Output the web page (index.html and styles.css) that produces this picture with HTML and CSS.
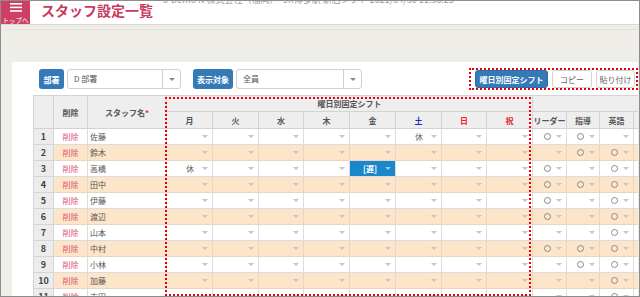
FILE: index.html
```html
<!DOCTYPE html>
<html lang="ja">
<head>
    <meta charset="UTF-8">
    <meta name="viewport" content="width=device-width, initial-scale=1.0">
    <title>スタッフ設定一覧</title>
    <link rel="stylesheet" href="styles.css">
</head>
<body>
<div class="frame">
    <!-- Header -->
    <header class="topbar">
        <div class="menu-btn">
            <svg class="menu-icon" viewBox="0 0 12 9" width="12" height="9">
                <rect x="0" y="0" width="12" height="1.6" fill="#fff"/>
                <rect x="0" y="3.6" width="12" height="1.6" fill="#fff"/>
                <rect x="0" y="7.2" width="12" height="1.6" fill="#fff"/>
            </svg>
            <span class="menu-label">トップへ</span>
        </div>
        <h1 class="page-title">スタッフ設定一覧</h1>
        <div class="account">0-Demo N 株式会社（福岡）　JR博多駅 新店シフト 2021/04/30 11:36:25</div>
    </header>

    <div class="stage">
        <div class="rule"></div>

        <div class="panel">
            <!-- Toolbar -->
            <div class="toolbar">
                <span class="tag tag-short">部署</span>
                <div class="select select-dept">
                    <span class="select-value">D 部署</span>
                    <span class="select-arrow"><i class="caret"></i></span>
                </div>
                <span class="tag tag-long">表示対象</span>
                <div class="select select-target">
                    <span class="select-value">全員</span>
                    <span class="select-arrow"><i class="caret"></i></span>
                </div>

                <div class="action-box">
                    <button class="btn btn-primary">曜日別固定シフト</button>
                    <button class="btn btn-copy">コピー</button>
                    <button class="btn btn-paste">貼り付け</button>
                </div>
            </div>

            <!-- Staff grid -->
            <div class="grid-wrap">
                <table class="grid">
                    <colgroup>
                        <col style="width:20px"><col style="width:34px"><col style="width:79px">
                        <col style="width:46px"><col style="width:46px"><col style="width:45px"><col style="width:46px">
                        <col style="width:46px"><col style="width:46px"><col style="width:45px"><col style="width:46px">
                        <col style="width:34px"><col style="width:33px"><col style="width:34px"><col style="width:40px">
                    </colgroup>
                    <thead>
                        <tr class="head-top">
                            <th rowspan="2"></th>
                            <th rowspan="2">削除</th>
                            <th rowspan="2">スタッフ名<span class="req">*</span></th>
                            <th colspan="8">曜日別固定シフト</th>
                            <th colspan="4"></th>
                        </tr>
                        <tr class="head-sub">
                            <th>月</th><th>火</th><th>水</th><th>木</th><th>金</th>
                            <th class="sat">土</th><th class="sun">日</th><th class="sun">祝</th>
                            <th>リーダー</th><th>指導</th><th>英語</th><th></th>
                        </tr>
                    </thead>
                    <tbody id="rows"></tbody>
                </table>
                <div class="shift-frame"></div>
            </div>
        </div>
    </div>
</div>

<script>
    // staff rows: name, fixed shifts by weekday index, flags (leader, coach, english)
    const staff = [
        ['佐藤', {5: '休'}, [1, 1, 0]],
        ['鈴木', {}, [0, 1, 1]],
        ['高橋', {0: '休', 4: '[遅]'}, [1, 0, 1]],
        ['田中', {}, [1, 1, 1]],
        ['伊藤', {}, [1, 0, 1]],
        ['渡辺', {}, [1, 0, 1]],
        ['山本', {}, [0, 0, 1]],
        ['中村', {}, [1, 1, 1]],
        ['小林', {}, [0, 1, 1]],
        ['加藤', {}, [0, 0, 1]],
        ['吉田', {}, [0, 0, 1]]
    ];

    const tbody = document.getElementById('rows');
    staff.forEach(function (s, i) {
        let html = '<td class="num">' + (i + 1) + '</td>'
            + '<td class="del">削除</td>'
            + '<td class="name">' + s[0] + '</td>';
        for (let d = 0; d < 8; d++) {
            const v = s[1][d] || '';
            const picked = (i === 2 && d === 4) ? ' class="picked"' : '';
            html += '<td' + picked + '><div class="dd">' + v + '</div></td>';
        }
        s[2].forEach(function (f) {
            html += '<td><div class="dd flag">' + (f ? '<span class="circle"></span>' : '') + '</div></td>';
        });
        html += '<td></td>';
        const tr = document.createElement('tr');
        if (i % 2 === 1) tr.className = 'alt';
        tr.innerHTML = html;
        tbody.appendChild(tr);
    });
</script>
</body>
</html>
```

FILE: styles.css
```css
/* General */
body {
    margin: 0;
}

.frame {
    width: 640px;
    height: 297px;
    box-sizing: border-box;
    border: 1px solid #8d8d8d;
    background: #efede8;
    overflow: hidden;
    font-family: "Noto Sans CJK JP", "Noto Sans", sans-serif;
}

/* Header */
.topbar {
    display: flex;
    height: 23px;
    background: #fff;
    border-bottom: 1px solid #dcd9d3;
    overflow: hidden;
}

.menu-btn {
    width: 29px;
    flex: none;
    background: #cf3f63;
    color: #fff;
    display: flex;
    flex-direction: column;
    align-items: center;
}

.menu-icon {
    margin-top: 2px;
}

.menu-label {
    font-size: 6.5px;
    line-height: 8px;
    margin-top: 4px;
    white-space: nowrap;
}

.page-title {
    margin: 1px 0 0 11px;
    font-size: 14px;
    line-height: 16px;
    font-weight: 700;
    color: #c93b5e;
    white-space: nowrap;
}

.account {
    margin: -7px 0 0 10px;
    font-size: 9px;
    line-height: 12px;
    color: #999;
    white-space: nowrap;
}

/* Page body */
.stage {
    padding: 4px 1px 0 11px;
}

.rule {
    height: 1px;
    margin-left: -2px;
    background: #e3e0da;
}

.panel {
    margin-top: 32px;
    height: 260px;
    background: #fff;
    padding: 6px 0 0 21px;
    overflow: hidden;
}

/* Toolbar */
.toolbar {
    display: flex;
    align-items: center;
    height: 22px;
    margin-left: 6px;
}

.tag {
    height: 20px;
    box-sizing: border-box;
    display: flex;
    align-items: center;
    justify-content: center;
    background: #337ab7;
    color: #fff;
    font-size: 8px;
    font-weight: 700;
    border-radius: 3px;
}

.tag-short {
    width: 25px;
}

.tag-long {
    width: 40px;
    margin-left: 12px;
}

.select {
    height: 20px;
    box-sizing: border-box;
    margin-left: 3px;
    display: flex;
    border: 1px solid #d0d0d0;
    border-radius: 3px;
}

.select-dept {
    width: 114px;
}

.select-target {
    width: 126px;
}

.select-value {
    flex: 1;
    padding-left: 6px;
    font-size: 8px;
    line-height: 18px;
    color: #555;
}

.select-arrow {
    width: 17px;
    border-left: 1px solid #d0d0d0;
    display: flex;
    align-items: center;
    justify-content: center;
}

.caret {
    border-left: 3px solid transparent;
    border-right: 3px solid transparent;
    border-top: 3px solid #888;
}

.action-box {
    margin-left: auto;
    height: 22px;
    box-sizing: border-box;
    border: 2px dotted #e5000c;
    padding: 0 1px 0 4px;
    display: flex;
    align-items: center;
    gap: 4px;
}

.btn {
    height: 18px;
    box-sizing: border-box;
    padding: 0;
    font-family: inherit;
    font-size: 8px;
    border-radius: 3px;
    cursor: pointer;
}

.btn-primary {
    width: 73px;
    background: #337ab7;
    border: 1px solid #2e6da4;
    color: #fff;
    font-weight: 700;
}

.btn-copy,
.btn-paste {
    background: #fff;
    border: 1px solid #d4d4d4;
    color: #666;
}

.btn-copy {
    width: 40px;
}

.btn-paste {
    width: 39px;
}

/* Grid */
.grid-wrap {
    position: relative;
    margin-top: 5px;
}

.grid {
    border-collapse: collapse;
    table-layout: fixed;
    width: 640px;
}

.grid th {
    background: #eeeeee;
    border: 1px solid #d3d3d3;
    color: #555;
    font-size: 8px;
    font-weight: 700;
    padding: 0;
    white-space: nowrap;
}

.head-top th {
    height: 15px;
}

.head-sub th {
    height: 16px;
}

.grid th.sat {
    color: #2323d0;
}

.grid th.sun {
    color: #e8262c;
}

.req {
    color: #e8262c;
}

.grid td {
    height: 15px;
    padding: 0;
    border: 1px solid #dcdcdc;
    font-size: 8px;
    color: #555;
    white-space: nowrap;
    overflow: hidden;
}

.grid tr.alt td {
    background: #fce5c9;
    border-color: #e6d6c2;
}

.grid td.num,
.grid tr.alt td.num {
    background: #ececec;
    border-color: #d6d6d6;
    text-align: center;
    font-size: 9px;
    font-weight: 700;
    color: #444;
}

.grid td.del {
    text-align: center;
    color: #e0577a;
}

.grid td.name {
    padding-left: 2px;
    color: #555;
}

.dd {
    height: 15px;
    display: flex;
    align-items: center;
    justify-content: flex-end;
    gap: 8px;
    padding-right: 4px;
    color: #666;
}

.dd::after {
    content: "";
    border-left: 3px solid transparent;
    border-right: 3px solid transparent;
    border-top: 3px solid #c6c6c6;
}

.dd.flag {
    gap: 5px;
}

.circle {
    width: 5px;
    height: 5px;
    border: 1px solid #8a8a8a;
    border-radius: 50%;
}

.grid td.picked {
    background: #1a87cc;
}

.picked .dd {
    color: #fff;
    font-weight: 700;
}

.picked .dd::after {
    border-top-color: #9cc9ea;
}

/* Highlight around the weekday shift columns */
.shift-frame {
    position: absolute;
    left: 132px;
    top: 2px;
    width: 366px;
    height: 199px;
    box-sizing: border-box;
    border: 2px dotted #e5000c;
    pointer-events: none;
}
```
